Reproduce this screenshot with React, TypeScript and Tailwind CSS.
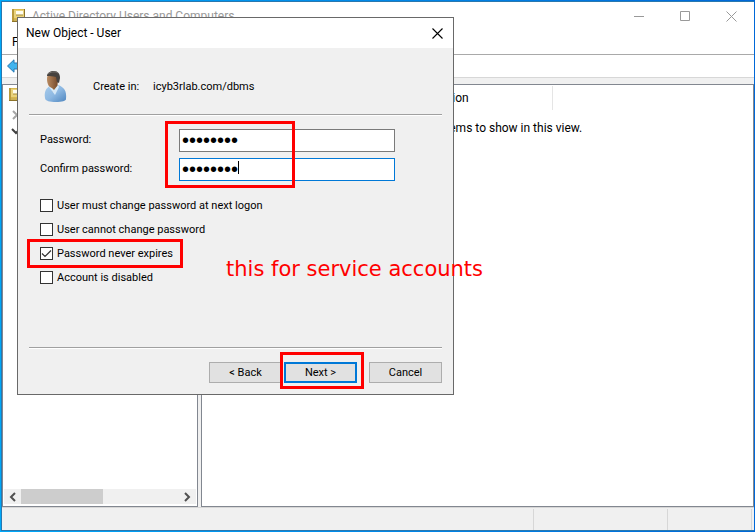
import type { ReactNode } from "react";

const ui = "font-[Roboto,'Open_Sans',sans-serif]";

function BookIcon() {
  return (
    <svg width="14" height="16" viewBox="0 0 14 16" aria-hidden="true">
      <path d="M0 1h13v13H0z" fill="#d9b84e" />
      <path d="M0 1h2v13H0z" fill="#b99a3c" />
      <path d="M2 2h10v8H2z" fill="#e9d27c" />
      <path d="M4 3h7v4H4z" fill="#fffdf0" />
      <path d="M4 7h7" stroke="#a58a35" />
      <path d="M2 11h10v2H2z" fill="#cdb157" />
      <path d="M0 13.500h13M12.500 1v13" fill="none" stroke="#8d742a" />
    </svg>
  );
}

function UserIcon() {
  return (
    <svg width="24" height="32" viewBox="0 0 24 32" aria-hidden="true">
      <defs>
        <linearGradient id="shirt" x1="0" y1="0" x2="1" y2="1">
          <stop offset="0" stopColor="#a9cdec" />
          <stop offset="0.5" stopColor="#8db8e2" />
          <stop offset="1" stopColor="#4f86bf" />
        </linearGradient>
        <linearGradient id="skin" x1="0" y1="0" x2="1" y2="0">
          <stop offset="0" stopColor="#b98a60" />
          <stop offset="1" stopColor="#74492a" />
        </linearGradient>
      </defs>
      <path d="M1 27C0 21 2 17 6 15l8-1c6 2 9 6 8 14 0 2-4 3-10 3S1 30 1 27z" fill="url(#shirt)" />
      <path d="M6 15l7-3 1 3-5 6z" fill="#8f6238" />
      <path d="M5 16l1-1 4 4 4-5 1 2-4 8z" fill="#d5e8f7" />
      <path d="M3 8c0-4 2-6 5-6 4 0 6 2 6 7s-2 8-5 8c-4 0-6-4-6-9z" fill="url(#skin)" />
      <path d="M3 5c0-3 3-5 7-5s6 3 6 7l-1 5-2-1-1-5C9 5 6 5 3 5z" fill="#46423f" />
      <path d="M4 3c2-2 7-3 10-1" fill="none" stroke="#77736f" />
    </svg>
  );
}

function Chevron({ d, color }: { d: string; color: string }) {
  return (
    <svg width="10" height="10" viewBox="0 0 10 10" aria-hidden="true">
      <path d={d} fill="none" stroke={color} strokeWidth="2" />
    </svg>
  );
}

function Mark({ className }: { className: string }) {
  return (
    <span
      aria-hidden="true"
      className={`pointer-events-none absolute z-10 border-3 border-[#ff0000] ${className}`}
    />
  );
}

function Rule() {
  return <div className="h-[2px] border-t border-[#a0a0a0] bg-white" />;
}

function PasswordRow({ id, label, active }: { id: string; label: string; active?: boolean }) {
  return (
    <div className="flex items-start">
      <label htmlFor={id} className="w-[139px] pt-[4px]">
        {label}
      </label>
      <div className="relative w-[216px]">
        <input
          id={id}
          type="password"
          defaultValue="password"
          className={`block h-[23px] w-full border bg-white px-[2px] font-['Liberation_Sans',sans-serif] text-[20px] leading-[20px] text-black outline-none ${
            active ? "border-[#0078d7]" : "border-[#7a7a7a]"
          }`}
        />
        {active && <span className="absolute top-[3px] left-[59px] h-[13px] w-px bg-black" />}
      </div>
    </div>
  );
}

function Option({ label, checked, children }: { label: string; checked?: boolean; children?: ReactNode }) {
  return (
    <div className="relative flex">
      <label className="flex h-[15px] items-center gap-[4px] leading-[15px]">
        <span className="grid size-[13px]">
          <input
            type="checkbox"
            defaultChecked={checked}
            className="peer col-start-1 row-start-1 size-[13px] appearance-none border border-[#333] bg-white"
          />
          <svg
            viewBox="0 0 13 13"
            aria-hidden="true"
            className="pointer-events-none invisible col-start-1 row-start-1 size-[13px] peer-checked:visible"
          >
            <path d="M2 6.500l3 3 6-6" fill="none" stroke="#333" strokeWidth="1.200" />
          </svg>
        </span>
        {label}
      </label>
      {children}
    </div>
  );
}

function DialogButton({ children, primary }: { children: ReactNode; primary?: boolean }) {
  return (
    <button
      type="button"
      className={`h-[21px] w-[73px] bg-[#e1e1e1] pt-px ${
        primary ? "border-2 border-[#0078d7]" : "border border-[#adadad]"
      }`}
    >
      {children}
    </button>
  );
}

function NewUserDialog() {
  return (
    <section
      role="dialog"
      aria-label="New Object - User"
      className="absolute top-[17px] left-[17px] w-[437px] border border-[#696969] bg-[#f0f0f0] font-[Roboto,'Liberation_Sans',sans-serif] text-[11px] leading-[14px] text-black"
    >
      <header className={`flex h-[30px] items-center justify-between bg-white pr-[10px] pl-[8px] text-[12px] ${ui}`}>
        <h2>New Object - User</h2>
        <button type="button" aria-label="Close">
          <svg width="11" height="11" viewBox="0 0 11 11" aria-hidden="true">
            <path d="M.5.5l10 10M10.500.5l-10 10" stroke="#000" strokeWidth="1.1" />
          </svg>
        </button>
      </header>

      <form className="px-[11px] pb-[11px]">
        <div className="flex h-[66px] items-center pt-[11px] pl-[15px]">
          <UserIcon />
          <span className="ml-[25px] w-[60px]">Create in:</span>
          <span>icyb3rlab.com/dbms</span>
        </div>
        <Rule />

        <div className="relative mt-[13px] flex flex-col gap-[6px] pl-[11px]">
          <PasswordRow id="password" label="Password:" />
          <PasswordRow id="confirm" label="Confirm password:" active />
          <Mark className="-top-[8px] left-[136px] h-[67px] w-[130px]" />
        </div>

        <div className="mt-[17px] flex flex-col gap-[9px] pl-[11px]">
          <Option label="User must change password at next logon" />
          <Option label="User cannot change password" />
          <Option label="Password never expires" checked>
            <Mark className="-top-[7px] -left-[13px] h-[29px] w-[156px]" />
            <p className="absolute top-[11px] left-[186px] font-['DejaVu_Sans',sans-serif] text-[21px] leading-[24px] whitespace-nowrap text-[#ff0000]">
              this for service accounts
            </p>
          </Option>
          <Option label="Account is disabled" />
        </div>

        <div className="mt-[62px]">
          <Rule />
        </div>
        <div className="mt-[13px] flex justify-end">
          <DialogButton>&lt; Back</DialogButton>
          <div className="relative mr-[12px] ml-[2px] flex">
            <DialogButton primary>Next &gt;</DialogButton>
            <Mark className="-top-[10px] -left-[4px] h-[37px] w-[84px]" />
          </div>
          <DialogButton>Cancel</DialogButton>
        </div>
      </form>
    </section>
  );
}

export default function App() {
  return (
    <div
      className={`relative h-screen overflow-hidden bg-linear-to-r from-[#00a8f8] to-[#0068d8] p-px text-[12px] leading-[16px] text-black ${ui}`}
    >
      <main className="flex h-full flex-col border-y border-l border-[#2878b0] bg-white">
        <header className="flex h-[28px] items-center pr-[17px] pl-[10px] text-[#999]">
          <BookIcon />
          <h1 className="ml-[6px] flex-1">Active Directory Users and Computers</h1>
          <div className="flex gap-[35px]">
            <button type="button" aria-label="Minimize">
              <svg width="11" height="11" viewBox="0 0 11 11" aria-hidden="true">
                <path d="M0 5.500h10" stroke="#999" />
              </svg>
            </button>
            <button type="button" aria-label="Maximize">
              <svg width="11" height="11" viewBox="0 0 11 11" aria-hidden="true">
                <path d="M.5.5h9v9h-9z" fill="none" stroke="#999" />
              </svg>
            </button>
            <button type="button" aria-label="Close window">
              <svg width="11" height="11" viewBox="0 0 11 11" aria-hidden="true">
                <path d="M.5.5l10 10M10.500.5l-10 10" stroke="#999" />
              </svg>
            </button>
          </div>
        </header>
        <nav className="flex h-[25px] items-center border-b border-[#a9a9a9] pl-[10px]">
          <button type="button">File</button>
        </nav>
        <div className="flex h-[23px] items-center border-b border-[#d7d7d7] pl-[5px]">
          <button type="button" aria-label="Back">
            <svg width="16" height="14" viewBox="0 0 16 14" aria-hidden="true">
              <path d="M.5 7L7 .8V4h8v6H7v3.200z" fill="#41b4ee" stroke="#2779b5" />
            </svg>
          </button>
        </div>

        <div className="flex min-h-0 flex-1 gap-[3px] bg-[#f0f0f0] pt-[6px]">
          <aside className="flex w-[196px] shrink-0 flex-col border border-[#828790] bg-white p-px">
            <div className="flex-1 pl-[5px]">
              <div className="mt-px">
                <BookIcon />
              </div>
              <div className="mt-[7px] ml-[2px] flex flex-col gap-[6px]">
                <Chevron d="M2 1l4 4-4 4" color="#a6a6a6" />
                <Chevron d="M1 3l4 4 4-4" color="#404040" />
              </div>
            </div>
            <div className="mb-px flex h-[15px] items-center bg-[#f0f0f0] px-[4px]">
              <Chevron d="M7 1L3 5l4 4" color="#505050" />
              <div className="ml-[3px] h-full w-[82px] bg-[#cdcdcd]" />
              <div className="ml-auto flex">
                <Chevron d="M3 1l4 4-4 4" color="#505050" />
              </div>
            </div>
          </aside>

          <section className="min-w-0 flex-1 border border-[#828790] bg-white">
            <div className="mt-px flex h-[24px] items-center">
              <span className="w-[100px] pl-[6px]">Name</span>
              <span className="w-[100px] pl-[6px]">Type</span>
              <span className="flex h-full w-[151px] items-center border-r border-[#e5e5e5] pl-[6px]">
                Description
              </span>
            </div>
            <p className="mt-[10px] text-center">There are no items to show in this view.</p>
          </section>
        </div>

        <footer className="flex h-[23px] justify-end border-t border-[#d7d7d7] bg-[#f0f0f0] pt-px pr-[2px]">
          <span className="w-[134px] border-l border-[#d7d7d7]" />
          <span className="w-[85px] border-x border-[#d7d7d7]" />
        </footer>
      </main>
      <NewUserDialog />
    </div>
  );
}
